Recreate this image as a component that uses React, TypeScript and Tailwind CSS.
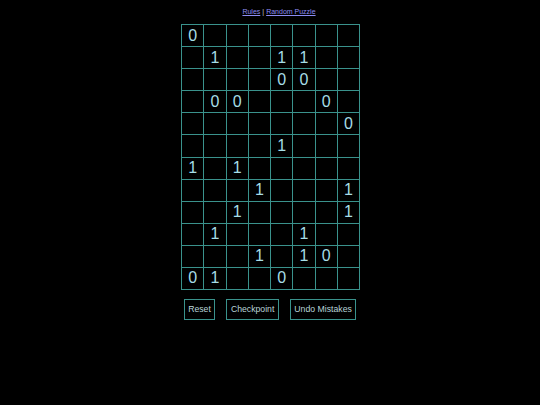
import React from "react";

const rows: string[] = [
  "0.......",
  ".1..11..",
  "....00..",
  ".00...0.",
  ".......0",
  "....1...",
  "1.1.....",
  "...1...1",
  "..1....1",
  ".1...1..",
  "...1.10.",
  "01..0...",
];

export default function App() {
  return (
    <div
      className="w-[540px] h-[405px] bg-black flex flex-col items-center overflow-hidden"
      style={{ fontFamily: '"Liberation Sans", Arial, sans-serif' }}
    >
      <div className="h-[24px] ml-[18px] flex items-center text-[7px] leading-none pb-[2px] text-[#c8c8c8]">
        <a className="text-[#8c8cf2] underline">Rules</a>
        <span className="mx-[2px]">|</span>
        <a className="text-[#8c8cf2] underline">Random Puzzle</a>
      </div>
      <div className="ml-[1px] w-[179px] h-[266px] bg-[#3a928c] p-[1px] grid grid-cols-8 grid-rows-12 gap-[1px]">
        {rows.flatMap((r, i) =>
          r.split("").map((c, j) => (
            <div
              key={`${i}-${j}`}
              className="bg-black flex items-center justify-center text-[16px] leading-none text-[#a6dde6]"
            >
              {c === "." ? "" : c}
            </div>
          ))
        )}
      </div>
      <div className="mt-[9px] flex gap-[11px]">
        {["Reset", "Checkpoint", "Undo Mistakes"].map((t) => (
          <button
            key={t}
            className="h-[21px] px-[3.5px] border border-[#3a928c] bg-black text-[8.7px] leading-none text-[#b8d4d8]"
          >
            {t}
          </button>
        ))}
      </div>
    </div>
  );
}
